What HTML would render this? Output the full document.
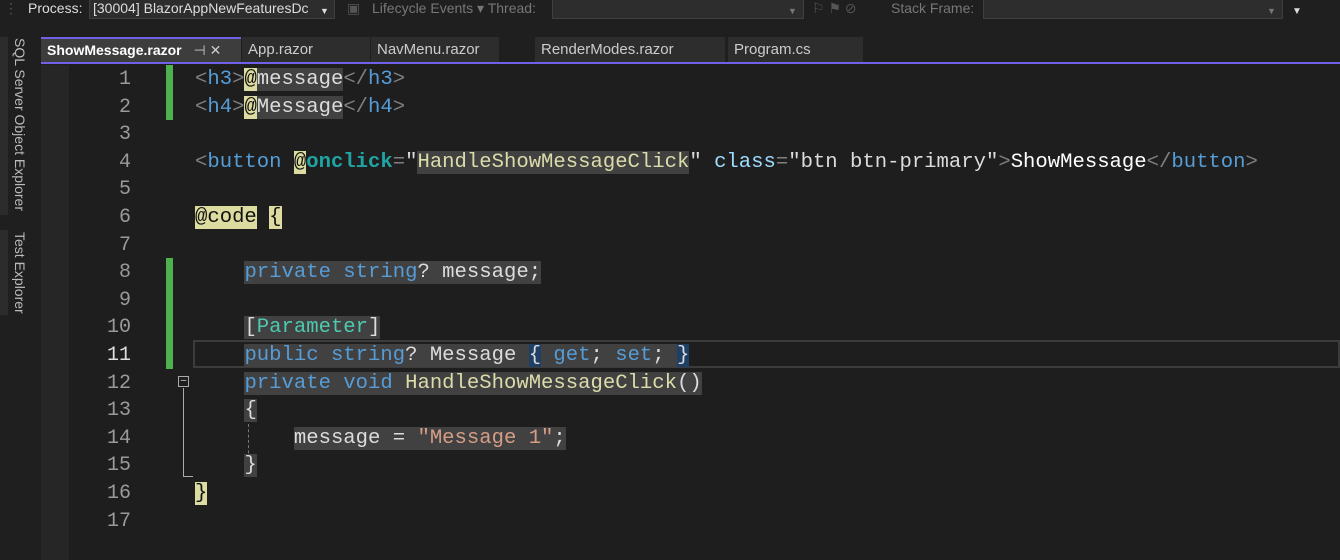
<!DOCTYPE html>
<html><head><meta charset="utf-8"><style>
*{margin:0;padding:0;box-sizing:border-box}
html,body{width:1340px;height:560px;overflow:hidden}
body{background:#1f1f1f;font-family:"Liberation Sans",sans-serif;position:relative;color:#ccc}
.tb{position:absolute;top:0;left:0;width:1340px;height:22px;background:#1f1f1f;font-size:14px;color:#ddd}
.tb span{position:absolute;top:0;line-height:16px}
.combo{position:absolute;top:0;height:19px;background:#2d2d2d;border:1px solid #3f3f3f;border-top:none}
.side{position:absolute;left:0;width:8px;background:#2c2c2c}
.vt{position:absolute;left:12px;writing-mode:vertical-rl;font-size:14px;color:#bbb;line-height:16px}
.tab{position:absolute;top:37px;height:26px;background:#2d2d2d;font-size:15px;color:#ccc;line-height:26px;padding-left:6px;white-space:nowrap}
.editor{position:absolute;left:41px;top:65px;width:1299px;height:495px;background:#1e1e1e}
.margin{position:absolute;left:41px;top:65px;width:28px;height:495px;background:#262626}
.ln{position:absolute;left:69px;width:62px;text-align:right;font-family:"Liberation Mono",monospace;font-size:20px;color:#9a9a9a}
.code{position:absolute;left:195px;font-family:"Liberation Mono",monospace;font-size:20.6px;color:#dcdcdc;line-height:27.6px}
.l{height:27.6px;white-space:pre}
.hl{background:#414141}
.g{color:#808080}.b{color:#569cd6}.y{background:#dcdca0;color:#111}.t{color:#4ec9b0}.m{color:#dcdcaa}.s{color:#d69d85}.a{color:#9cdcfe}.oc{color:#1fa3a3;font-weight:bold}
.bm{background:#1e4066}
.green{position:absolute;left:166px;width:7px;background:#4fb04f}
</style></head><body>
<div class="tb">
<span style="left:4px;color:#555">⋮</span>
<span style="left:28px">Process:</span>
<div class="combo" style="left:89px;width:246px"><span style="left:3px;color:#ddd">[30004] BlazorAppNewFeaturesDc</span><span style="left:230px;font-size:9px;top:3px">▼</span></div>
<span style="left:347px;color:#555">▣</span>
<span style="left:372px;color:#777">Lifecycle Events ▾ Thread:</span>
<div class="combo" style="left:552px;width:252px"><span style="left:235px;font-size:9px;top:3px;color:#777">▼</span></div>
<span style="left:812px;color:#555">⚐ ⚑ ⊘</span>
<span style="left:891px;color:#777">Stack Frame:</span>
<div class="combo" style="left:983px;width:300px"><span style="left:283px;font-size:9px;top:3px;color:#777">▼</span></div>
<span style="left:1292px;top:4px;font-size:10px;color:#ddd">▼</span>
</div>
<div class="side" style="top:37px;height:178px"></div>
<div class="side" style="top:230px;height:85px"></div>
<div class="vt" style="top:38px">SQL Server Object Explorer</div>
<div class="vt" style="top:232px">Test Explorer</div>
<div class="tab" style="left:41px;width:200px;background:#3d3d3d;border-top:2px solid #7160e8;line-height:23px;font-weight:bold;color:#fff;font-size:14px">ShowMessage.razor <span style="font-weight:normal;color:#ccc;margin-left:8px">⊣ ✕</span></div>
<div class="tab" style="left:242px;width:128px">App.razor</div>
<div class="tab" style="left:371px;width:128px">NavMenu.razor</div>
<div class="tab" style="left:535px;width:190px">RenderModes.razor</div>
<div class="tab" style="left:728px;width:135px">Program.cs</div>
<div style="position:absolute;left:41px;top:62px;width:1299px;height:2px;background:#7160e8"></div>
<div class="editor"></div>
<div class="margin"></div>
<div class="green" style="top:65px;height:55px"></div>
<div class="green" style="top:258px;height:111px"></div>
<div style="position:absolute;left:193px;top:340px;width:1147px;height:28px;border:2px solid #3c3c3c"></div>
<div style="position:absolute;left:178px;top:376px;width:11px;height:11px;border:1px solid #aaa;color:#ddd;font-size:10px;line-height:8px;text-align:center">–</div>
<div style="position:absolute;left:183px;top:388px;width:1px;height:88px;background:#aaa"></div>
<div style="position:absolute;left:183px;top:476px;width:10px;height:1px;background:#aaa"></div>
<div style="position:absolute;left:248px;top:424px;width:0;height:40px;border-left:1px dashed #777"></div>
<div class="ln" style="top:66px;line-height:27.6px">1<br>2<br>3<br>4<br>5<br>6<br>7<br>8<br>9<br>10<br><span style="color:#ddd">11</span><br>12<br>13<br>14<br>15<br>16<br>17</div>
<div class="code" style="top:66px">
<div class="l"><span class="g">&lt;</span><span class="b">h3</span><span class="g">&gt;</span><span class="y">@</span><span class="hl">message</span><span class="g">&lt;/</span><span class="b">h3</span><span class="g">&gt;</span></div>
<div class="l"><span class="g">&lt;</span><span class="b">h4</span><span class="g">&gt;</span><span class="y">@</span><span class="hl">Message</span><span class="g">&lt;/</span><span class="b">h4</span><span class="g">&gt;</span></div>
<div class="l"></div>
<div class="l"><span class="g">&lt;</span><span class="b">button</span> <span class="y">@</span><span class="oc">onclick</span><span class="g">=</span>"<span class="hl m">HandleShowMessageClick</span>" <span class="a">class</span><span class="g">=</span>"btn btn-primary"<span class="g">&gt;</span><span style="color:#fff">ShowMessage</span><span class="g">&lt;/</span><span class="b">button</span><span class="g">&gt;</span></div>
<div class="l"></div>
<div class="l"><span class="y">@code</span> <span class="y">{</span></div>
<div class="l"></div>
<div class="l">    <span class="hl"><span class="b">private string</span>? message;</span></div>
<div class="l"></div>
<div class="l">    <span class="hl">[<span class="t">Parameter</span>]</span></div>
<div class="l">    <span class="hl"><span class="b">public string</span>? Message <span class="bm">{</span> <span class="b">get</span>; <span class="b">set</span>; <span class="bm">}</span></span></div>
<div class="l">    <span class="hl"><span class="b">private void</span> <span class="m">HandleShowMessageClick</span>()</span></div>
<div class="l">    <span class="hl">{</span></div>
<div class="l">        <span class="hl">message = <span class="s">"Message 1"</span>;</span></div>
<div class="l">    <span class="hl">}</span></div>
<div class="l"><span class="y">}</span></div>
<div class="l"></div>
</div>
</body></html>
